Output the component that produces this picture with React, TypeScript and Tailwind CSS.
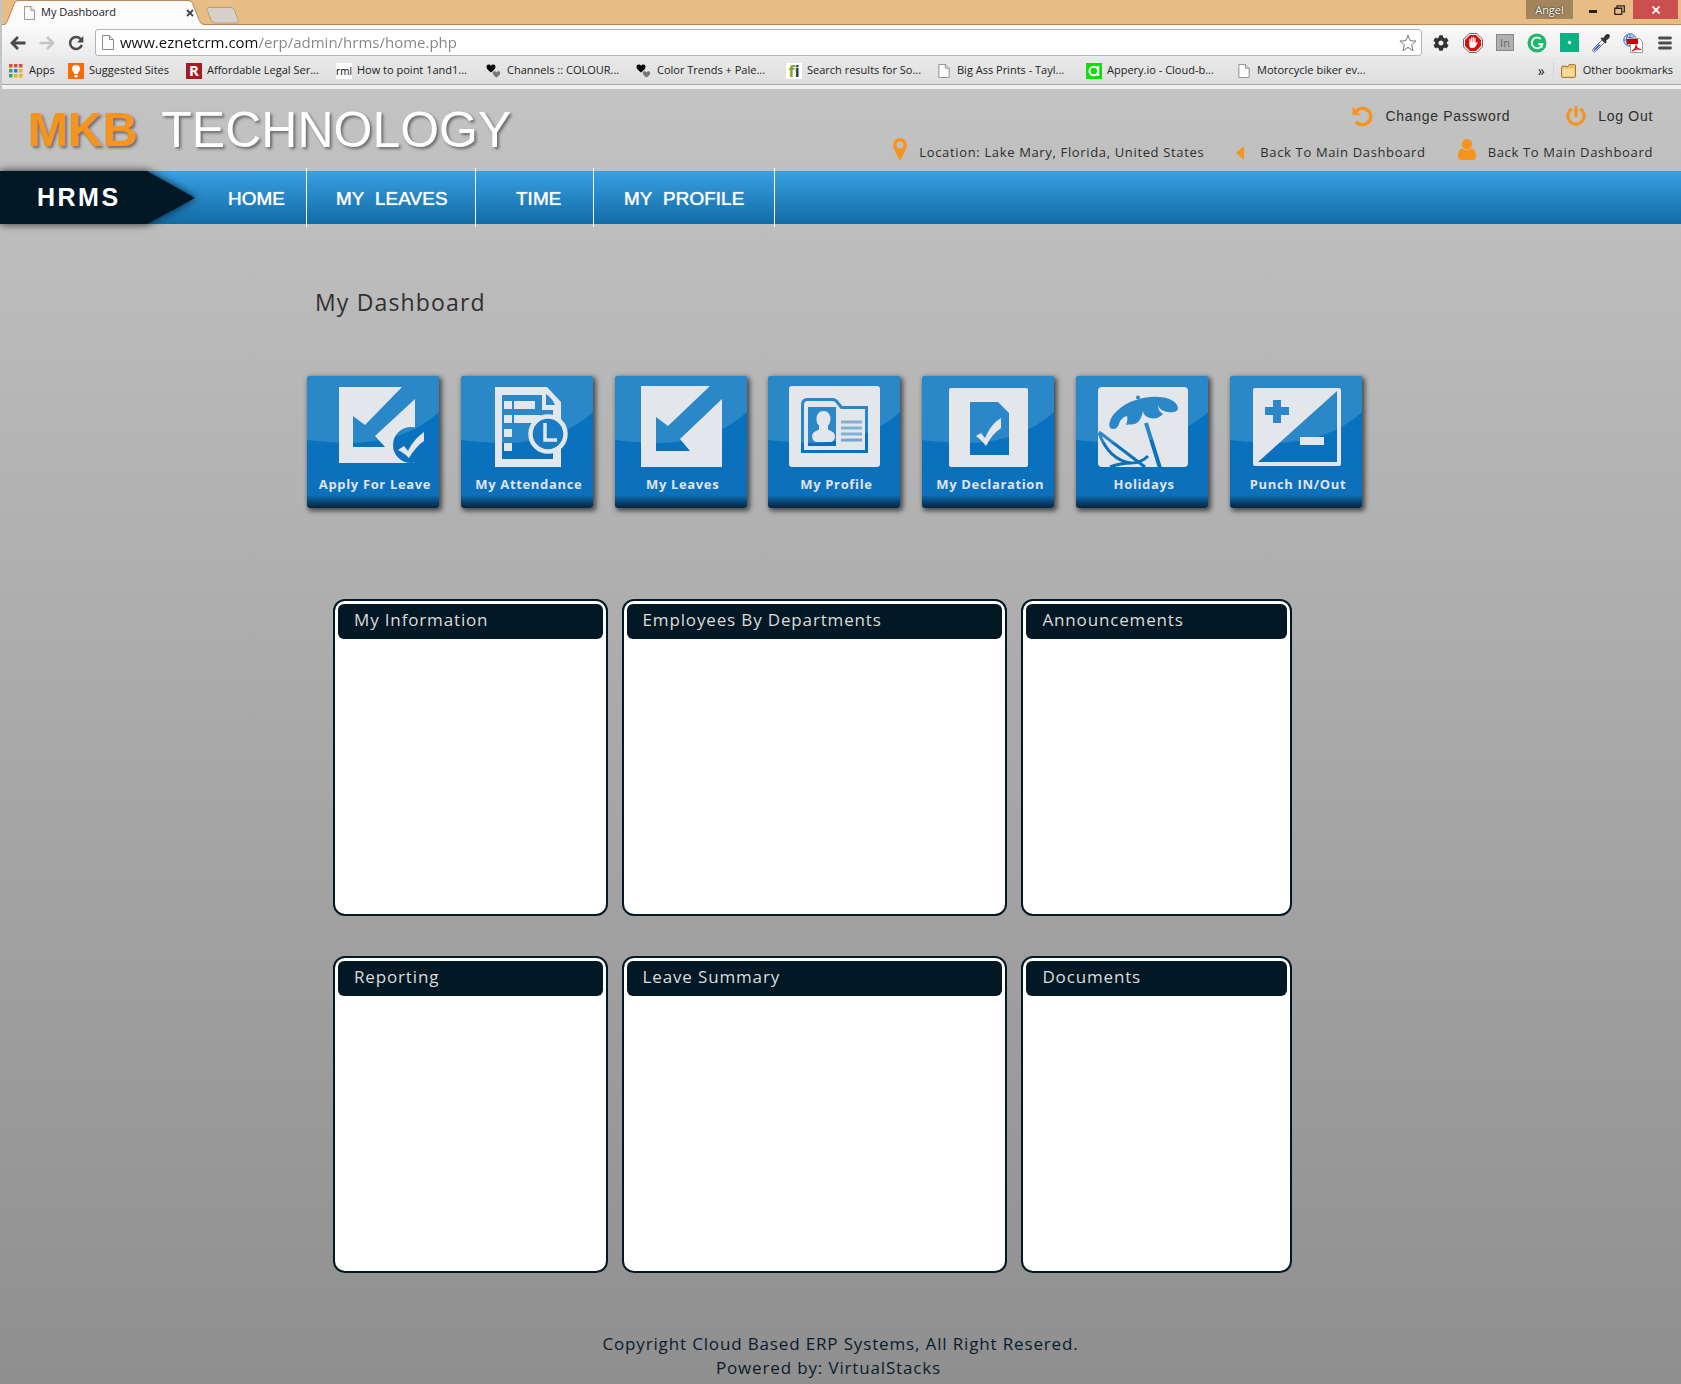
import React from "react";
import { FaPowerOff, FaCog } from "react-icons/fa";

const DocIcon = ({ className }: { className?: string }) => (
  <svg viewBox="0 0 12 15" className={className} aria-hidden="true">
    <path d="M.5.5h7l4 4v10H.5z" fill="#fbfbfb" stroke="#8b8b8b" />
    <path d="M7.500.5v4h4" fill="#e4e4e4" stroke="#8b8b8b" />
  </svg>
);

const HeartsIcon = () => (
  <svg viewBox="0 0 16 16" className="size-4" aria-hidden="true">
    <path d="M5 9.500C2.500 7.500.5 6 .5 3.700.5 1.200 3.800.6 5 3c1.200-2.400 4.500-1.800 4.500.7C9.500 6 7.500 7.500 5 9.500z" fill="#050505" />
    <path d="M10.500 14.500C8.500 13 6.800 11.800 6.800 10c0-2 2.700-2.400 3.700-.5 1-1.900 3.700-1.500 3.700.5 0 1.800-1.700 3-3.700 4.500z" fill="#777" />
  </svg>
);

const AppsIcon = () => (
  <svg viewBox="0 0 14 14" className="size-[14px]" aria-hidden="true">
    <path d="M0 0h3.500v3.500H0zM5 0h3.500v3.500H5zM10 0h3.500v3.500H10z" fill="#e5483c" />
    <path d="M0 5h3.500v3.500H0z" fill="#35a564" />
    <path d="M5 5h3.500v3.500H5z" fill="#2f7de1" />
    <path d="M10 5h3.500v3.500H10zM5 10h3.500v3.500H5zM10 10h3.500v3.500H10z" fill="#efb118" />
    <path d="M0 10h3.500v3.500H0z" fill="#35a564" />
  </svg>
);

const BulbIcon = () => (
  <svg viewBox="0 0 16 16" className="size-4" aria-hidden="true">
    <path d="M0 0h16v16H0z" fill="#fb6a0a" />
    <path d="M8 2a4 4 0 0 0-4 4c0 2 1.800 2.800 2.200 5h3.600C10.200 8.800 12 8 12 6a4 4 0 0 0-4-4zM6.400 12h3.200v1.200l-.8 1.300H7.200l-.8-1.300z" fill="#fff" />
  </svg>
);

const LetterIcon = ({ text, className }: { text: string; className: string }) => (
  <span className={"flex size-4 shrink-0 items-center justify-center leading-none " + className}>{text}</span>
);

const ApperyIcon = () => (
  <svg viewBox="0 0 16 16" className="size-4" aria-hidden="true">
    <path d="M0 0h16v16H0z" fill="#0be00b" />
    <circle cx="7.800" cy="8" r="4.300" fill="none" stroke="#fff" strokeWidth="2" />
    <path d="M12.200 3v10" stroke="#fff" strokeWidth="2" />
  </svg>
);

const bookmarks: { icon: React.ReactNode; label: string }[] = [
  { icon: <LetterIcon text="R" className="bg-[#a51b1f] text-[15px] font-bold text-white" />, label: "Affordable Legal Ser..." },
  { icon: <LetterIcon text="rml" className="bg-white text-[10px] text-black" />, label: "How to point 1and1..." },
  { icon: <HeartsIcon />, label: "Channels :: COLOUR..." },
  { icon: <HeartsIcon />, label: "Color Trends + Pale..." },
  {
    icon: (
      <span className="flex size-4 shrink-0 items-center justify-center bg-white text-[16px] leading-none font-bold">
        <span className="text-[#79a82c]">f</span>
        <span className="text-[#333]">i</span>
      </span>
    ),
    label: "Search results for So...",
  },
  { icon: <DocIcon className="h-[14px] w-4" />, label: "Big Ass Prints - Tayl..." },
  { icon: <ApperyIcon />, label: "Appery.io - Cloud-b..." },
  { icon: <DocIcon className="h-[14px] w-4" />, label: "Motorcycle biker ev..." },
];

const extensions: { label: string; icon: React.ReactNode }[] = [
  { label: "Settings", icon: <FaCog className="size-4 text-[#333]" /> },
  {
    label: "AdBlock",
    icon: (
      <svg viewBox="0 0 20 20" className="size-5">
        <path d="M6.200.5h7.600l5.700 5.700v7.600l-5.700 5.700H6.200L.5 13.800V6.200z" fill="#fff" stroke="#666" />
        <path d="M6.900 2h6.200L18 6.900v6.200L13.100 18H6.900L2 13.100V6.900z" fill="#dd0d0d" />
        <path d="M6.300 9.500V6.300c0-.9 1.200-.9 1.200 0V9h.4V5c0-.9 1.300-.9 1.300 0v4h.4V4.500c0-.9 1.300-.9 1.300 0V9h.4V5.500c0-.9 1.300-.9 1.300 0v5l1-1c.8-.6 1.400 0 .9.800l-2.300 3.700c-.9 1.400-5 1.400-5.500 0-.4-1.300-.4-2.500-.4-4.500z" fill="#fff" />
      </svg>
    ),
  },
  { label: "LinkedIn", icon: <span className="flex h-[17px] w-[18px] items-center justify-center border border-[#888] bg-[#b0b0b0] text-[11px] leading-none text-[#666]">In</span> },
  {
    label: "Grammarly",
    icon: (
      <svg viewBox="0 0 20 20" className="size-5">
        <circle cx="10" cy="10" r="9.500" fill="#1fb96c" />
        <path d="M13.800 6.200A5.300 5.300 0 1 0 15.300 11h-4M15.300 11l-1 4" fill="none" stroke="#fff" strokeWidth="1.800" />
      </svg>
    ),
  },
  {
    label: "Recorder",
    icon: (
      <svg viewBox="0 0 19 19" className="size-[19px]">
        <path d="M0 0h19v19H0z" fill="#09b183" />
        <circle cx="9.500" cy="9.500" r="1.700" fill="#fff" />
      </svg>
    ),
  },
  {
    label: "Color picker",
    icon: (
      <svg viewBox="0 0 20 20" className="size-5">
        <path d="M2 18.500c-1-1 0-2.500 1-3.500l8-8 2.500 2.500-8 8c-1 1-2.500 2-3.500 1z" fill="#eef2fa" stroke="#777" />
        <path d="M3 17.500c-.5-.8 0-1.500.8-2.300l3.700-3.700 2.500.2-4.700 4.800c-.8.8-1.600 1.500-2.300 1z" fill="#3366dd" />
        <path d="M9.500 5.500l1.500-1.300 1.200 1C13.500 3.500 14.500 1 16.500 1c2.200 0 3 2.200 2 3.700-.8 1.200-2.500 2-3.600 3l1 1.300-1.500 1.500z" fill="#333" />
      </svg>
    ),
  },
  {
    label: "Web to PDF",
    icon: (
      <svg viewBox="0 0 20 20" className="size-5">
        <circle cx="7" cy="7" r="6.300" fill="#cfe0f6" stroke="#3d74c0" />
        <path d="M1 7h12M7 1v12M3 3c2 2 6 2 8 0M4.500 2c-1.500 3-1.500 7 0 10" fill="none" stroke="#3d74c0" />
        <path d="M7.500 5.500h9l3 3v11h-12z" fill="#fff" stroke="#999" />
        <path d="M4 6h11v5H4z" fill="#d00000" />
        <path d="M9 18c3-1 4.500-4 4-6.500 0 3 2 5 5 5-3-1-6-.5-9 1.500z" fill="none" stroke="#c00" strokeWidth="1.200" />
      </svg>
    ),
  },
  {
    label: "Menu",
    icon: (
      <svg viewBox="0 0 14 14" className="size-[14px]">
        <path d="M1.500 2h11M1.500 7h11M1.500 12h11" stroke="#4d4d4d" strokeWidth="2.800" strokeLinecap="round" />
      </svg>
    ),
  },
];

const BrowserChrome = () => (
  <div className="border-l-2 border-[#c4c4c4] font-['Open_Sans',sans-serif] text-[#222]">
    <div className="flex h-[25px] items-start justify-between bg-[#e8bd85] shadow-[inset_0_-1px_0_#b08a58]">
      <div className="flex">
        <div className="relative flex h-[25px] w-[208px] items-center pl-[22px]">
          <svg viewBox="0 0 208 25" className="absolute inset-0 size-full" aria-hidden="true">
            <path d="M0 25c4 0 5-2 6-5l6-15c1-3 2-4 5-4h169c3 0 4 1 5 4l6 15c1 3 2 5 8 5z" fill="#fbfbfb" />
            <path d="M0 24.500c4 0 5-2 6-5l6-15c1-3 2-4 5-4h169c3 0 4 1 5 4l6 15c1 3 2 5 8 5" fill="none" stroke="#b08a58" />
          </svg>
          <DocIcon className="relative h-[14px] w-[11px]" />
          <span className="relative ml-[6px] grow text-[11px]">My Dashboard</span>
          <button aria-label="Close tab" className="relative mr-4">
            <svg viewBox="0 0 8 8" className="size-2"><path d="M1 1l6 6M7 1L1 7" stroke="#444" strokeWidth="1.800" /></svg>
          </button>
        </div>
        <button aria-label="New tab" className="mt-[5px] -ml-1">
          <svg viewBox="0 0 33 17" className="h-[17px] w-[33px]">
            <path d="M3 .5h21c3 0 4 1 5 4l3 8c1 3 0 3.500-2 3.500H10c-3 0-4-1-5-3.500L1.500 4C.5 1.500 1 .5 3 .5z" fill="#d6d2cb" stroke="#b59d7c" />
          </svg>
        </button>
      </div>
      <div className="flex h-[19px] items-center">
        <button className="h-full w-[47px] bg-[#a3855c] text-[11px] leading-none text-white [text-shadow:0_0_2px_#000]">Angel</button>
        <button aria-label="Minimize" className="flex w-9 justify-end pr-3 pt-1">
          <span className="h-[3px] w-2 bg-[#222]" />
        </button>
        <button aria-label="Restore" className="w-6 pl-[5px]">
          <svg viewBox="0 0 11 10" className="h-[10px] w-[11px]">
            <path d="M.75 3h7v6.300h-7zM.5 3.500h7.500M3 2.500V.8h7.300V7H8.500" fill="none" stroke="#222" strokeWidth="1.200" />
          </svg>
        </button>
        <button aria-label="Close" className="mr-[3px] flex h-full w-[45px] items-center justify-center bg-[#c9504f]">
          <svg viewBox="0 0 8 8" className="size-2"><path d="M.5.5l7 7M7.500.5l-7 7" stroke="#fff" strokeWidth="1.700" /></svg>
        </button>
      </div>
    </div>

    <div className="flex h-8 items-center bg-linear-to-b from-[#fbfbfb] to-[#ececec] pt-[3px]">
      <div className="flex w-[93px] shrink-0 items-center gap-[13px] pl-2">
        <button aria-label="Back">
          <svg viewBox="0 0 16 14" className="h-[14px] w-4"><path d="M15.500 7H2.500M8 1L2 7l6 6" fill="none" stroke="#4a4a4a" strokeWidth="2.800" /></svg>
        </button>
        <button aria-label="Forward">
          <svg viewBox="0 0 16 14" className="h-[14px] w-4"><path d="M.5 7h13M8 1l6 6-6 6" fill="none" stroke="#c6c6c6" strokeWidth="2.600" /></svg>
        </button>
        <button aria-label="Reload">
          <svg viewBox="0 0 16 16" className="size-4">
            <path d="M13 4.500A6 6 0 1 0 13.800 10" fill="none" stroke="#4a4a4a" strokeWidth="2.500" />
            <path d="M15.300 1v6.500H9z" fill="#4a4a4a" />
          </svg>
        </button>
      </div>
      <div className="flex h-[27px] grow items-center rounded-[3px] border border-[#b4b4b4] bg-white pr-1">
        <DocIcon className="ml-[6px] h-[15px] w-3" />
        <input
          aria-label="Address"
          defaultValue="www.eznetcrm.com/erp/admin/hrms/home.php"
          className="ml-[6px] grow bg-linear-to-r from-[#111] from-[137px] to-[#848484] to-[137px] bg-clip-text text-[15px] text-transparent outline-none"
        />
        <button aria-label="Bookmark this page">
          <svg viewBox="0 0 18 18" className="size-[18px]">
            <path d="M9 1.200l2.200 5.500 5.900.3-4.600 3.800 1.600 5.800L9 13.400l-5.100 3.200 1.600-5.800L.9 7l5.900-.3z" fill="#fff" stroke="#777" />
          </svg>
        </button>
      </div>
      <div className="flex shrink-0 pl-[3px]">
        {extensions.map((e) => (
          <button key={e.label} aria-label={e.label} className="flex w-8 items-center justify-center">
            {e.icon}
          </button>
        ))}
      </div>
    </div>

    <nav aria-label="Bookmarks" className="flex h-7 items-center overflow-hidden border-b border-[#a8a8a8] bg-linear-to-b from-[#e9e9e9] to-[#dedede] pr-2 pl-[7px] text-[11px] whitespace-nowrap text-[#222]">
      <a href="#apps" className="flex w-[59px] items-center gap-[6px]"><AppsIcon />Apps</a>
      <a href="#suggested" className="flex w-[118px] items-center gap-[5px]"><BulbIcon />Suggested Sites</a>
      {bookmarks.map((b) => (
        <a key={b.label} href="#bookmark" className="flex w-[150px] items-center gap-[5px]">
          {b.icon}
          {b.label}
        </a>
      ))}
      <button aria-label="More bookmarks" className="ml-auto text-sm leading-none">»</button>
      <a href="#other" className="ml-2 flex items-center gap-[6px] border-l border-[#d0d8e0] pl-[7px]">
        <svg viewBox="0 0 16 14" className="h-[14px] w-4" aria-hidden="true">
          <path d="M.5 12.500V3.500C.5 2.500 1 2 2 2l5 .5 1-1.800c.3-.3.500-.3 1-.3h4.500c.6 0 1 .4 1 1v11c0 .6-.4 1-1 1H1.500c-.6 0-1-.4-1-1z" fill="#eabb66" stroke="#a4762c" />
          <path d="M1.500 4.500h12v8h-12z" fill="#f9dc9a" />
        </svg>
        Other bookmarks
      </a>
    </nav>
    <div className="h-1 bg-[#f1f1f1]" />
  </div>
);

const UndoIcon = () => (
  <svg viewBox="0 0 21 21" className="size-[21px]" aria-hidden="true">
    <path d="M4 5.500A8.200 8.200 0 1 1 4 15.500" fill="none" stroke="#f7941e" strokeWidth="3.400" />
    <path d="M.5.800V9h8z" fill="#f7941e" />
  </svg>
);

const PinIcon = () => (
  <svg viewBox="0 0 14 22" className="mb-2 h-[22px] w-[14px]" aria-hidden="true">
    <path d="M7 0a7 7 0 0 1 7 7c0 1.500-.3 2.500-.7 3.300L8.300 21q-.5 1-1.300 1t-1.300-1L.7 10.300C.3 9.500 0 8.500 0 7a7 7 0 0 1 7-7zm0 3.500a3.500 3.500 0 1 0 0 7 3.500 3.500 0 0 0 0-7z" fill="#f7941e" />
  </svg>
);

const UserIcon = () => (
  <svg viewBox="0 0 18 21" className="mb-2 h-[21px] w-[18px]" aria-hidden="true">
    <circle cx="9" cy="5.200" r="5.200" fill="#f7941e" />
    <path d="M4.500 9.500Q9 13.500 13.500 9.500C17 10 18 13.500 18 17.500c0 2-1.200 3.500-3.200 3.500H3.200C1.200 21 0 19.500 0 17.500c0-4 1-7.500 4.500-8z" fill="#f7941e" />
  </svg>
);

const utility = "flex items-center tracking-wider text-[#2e2e2e]";

const Header = () => (
  <header className="flex h-[82px] items-start justify-between pr-7 pl-7">
    <h1 className="flex items-center gap-6 pt-[11px] font-['Liberation_Sans',Arial,sans-serif] text-[50px] leading-[60px] text-white [text-shadow:2px_2px_3px_rgba(0,0,0,0.45)]">
      <span className="text-[48px] font-bold text-[#f7941e]">MKB</span>
      <span>TECHNOLOGY</span>
    </h1>
    <div className="flex flex-col items-end pt-[15px] font-['Open_Sans',sans-serif]">
      <div className="flex h-6 items-center gap-14 font-['Liberation_Sans',Arial,sans-serif] text-sm">
        <a href="#password" className={utility + " gap-3"}><UndoIcon />Change Password</a>
        <a href="#logout" className={utility + " gap-3"}><FaPowerOff className="size-5 text-[#f7941e]" />Log Out</a>
      </div>
      <div className="mt-[11px] flex h-7 items-center gap-8 text-[13px]">
        <span className={utility + " gap-3"}>
          <PinIcon />Location: Lake Mary, Florida, United States
        </span>
        <a href="#main" className={utility + " gap-4"}>
          <svg viewBox="0 0 8 14" className="h-[14px] w-2" aria-hidden="true"><path d="M8 0v14L0 7z" fill="#f7941e" /></svg>
          Back To Main Dashboard
        </a>
        <a href="#user" className={utility + " gap-3"}>
          <UserIcon />Back To Main Dashboard
        </a>
      </div>
    </div>
  </header>
);

const navItems = [
  { label: "HOME", width: "w-[112px] pl-[33px]" },
  { label: "MY\u00a0 LEAVES", width: "w-[169px] pl-[29px]" },
  { label: "TIME", width: "w-[118px] pl-[40px]" },
  { label: "MY\u00a0 PROFILE", width: "w-[181px] pl-[30px]" },
];

const NavBar = () => (
  <nav aria-label="Main" className="flex h-[53px] items-center bg-linear-to-b from-[#38a1e4] to-[#116ba5] font-['Liberation_Sans',Arial,sans-serif] text-white">
    <div className="relative flex h-full w-[195px] items-center pl-[37px]">
      <svg viewBox="0 0 195 53" className="absolute inset-0 size-full overflow-visible drop-shadow-[0_0_4px_rgba(0,0,0,0.8)]" aria-hidden="true">
        <path d="M0 0h147l48 27-48 26H0z" fill="#021825" />
      </svg>
      <span className="relative text-[25px] font-bold tracking-widest">HRMS</span>
    </div>
    {navItems.map((n) => (
      <a key={n.label} href="#nav" className={"flex h-[59px] items-center border-r border-white pt-1 text-[19px] whitespace-pre [text-shadow:0_0_1px_#fff] " + n.width}>
        {n.label}
      </a>
    ))}
  </nav>
);

type Glyph = { id: string; label: string; plate: React.ReactNode; cut: React.ReactNode; top?: React.ReactNode };

const glyphs: Glyph[] = [
  {
    id: "apply",
    label: "Apply For Leave",
    plate: <path d="M32 11h76v76H32z" />,
    cut: (
      <>
        <path d="M95 11h13v12L68 60l10 11H46V40l12 9z" />
        <circle cx="104" cy="69" r="18" />
      </>
    ),
    top: <path d="M91 74l6-4 4 5c4-8 9-14 16-19v9c-6 4-11 10-15 17-4-4-7-6-11-8z" />,
  },
  {
    id: "attendance",
    label: "My Attendance",
    plate: <path d="M34 11h52l14 15v65H34z" />,
    cut: (
      <>
        <path d="M41 19h40v15h11v49H41z" />
        <path d="M85 18v11h9c-2-5-5-8-9-11z" />
      </>
    ),
    top: (
      <>
        <path d="M43 25h8v8h-8zM43 39h8v8h-8zM43 53h8v8h-8zM43 67h8v8h-8zM53 25h21v8H53zM53 39h27l-6 8H53z" />
        <g fill="none">
          <circle cx="87" cy="58" r="16" fill="#1a7bc2" />
          <circle cx="87" cy="58" r="17.500" stroke="#e3e6ea" strokeWidth="4.500" />
          <path d="M84 47v17h12" stroke="#e3e6ea" strokeWidth="3.500" />
        </g>
      </>
    ),
  },
  {
    id: "leaves",
    label: "My Leaves",
    plate: <path d="M26 10h81v81H26z" />,
    cut: <path d="M95 10h12v13L65 63l10 12H41V41l12 9z" />,
  },
  {
    id: "profile",
    label: "My Profile",
    plate: <rect x="21" y="10" width="91" height="81" rx="3" />,
    cut: (
      <>
        <path d="M34.500 75.500V29q0-5.500 5-5.500h25q3 0 5 3l4 5h25v44z" fill="none" stroke="#000" strokeWidth="3" />
        <path d="M40 31h28v39H40z" />
        <path d="M73 46h21M73 52h21M73 58h21M73 64h21" stroke="#777" strokeWidth="3" />
      </>
    ),
    top: (
      <path d="M55.500 35c4.500 0 7 3.500 7 8 0 3-1 5-2.500 6.500v4l4 2c4 2 4.500 9-1 10.500H48c-5-1.500-5-8.500-1-10.500l4-2v-4c-2-1.500-2.500-4-2.500-6.500 0-4.500 2.500-8 7-8z" />
    ),
  },
  {
    id: "declaration",
    label: "My Declaration",
    plate: <rect x="27" y="12" width="79" height="79" rx="2" />,
    cut: <path d="M48 26h28l11 11v42H48z" />,
    top: <path d="M54 60l5-3 4 5c4-9 9-16 16-20v10c-6 4-11 10-15 18-3-4-6-7-10-10z" />,
  },
  {
    id: "holidays",
    label: "Holidays",
    plate: <rect x="22" y="11" width="90" height="80" rx="4" />,
    cut: (
      <>
        <circle cx="62" cy="21.500" r="2" />
        <path d="M37 53C31 53 33 44 38 38c6-7 14-12 24-14.500C68 21.500 75 20.500 82 21c10 0 19 4 20 11 0 5-9 5-14 3-3-1-5-3-6-5.500 0 4 2 7 5 8.500-4 4.500-9 5-13 4-4-1-7-4-7-7.500-1 6-3 11-7 13-3 1.500-7 .5-10 1.500 1-3 2-6 1-9-4 1-7 4-8 8-1 3-3 5-6 5z" />
        <path d="M70 47l14 45" stroke="#000" strokeWidth="4" fill="none" />
        <path d="M23 56l46 35M23 57q10 27 32 30 10 0 17-7M34 91q10-4 22-4" stroke="#000" strokeWidth="3" fill="none" />
      </>
    ),
  },
  {
    id: "punch",
    label: "Punch IN/Out",
    plate: <rect x="23" y="12" width="88" height="78" rx="2" />,
    cut: (
      <>
        <path d="M28 86l79-71v71z" />
        <path d="M43 24h8v7h8v8h-8v8h-8v-8h-8v-8h8z" />
      </>
    ),
    top: <path d="M70 61h24v8H70z" />,
  },
];

const Tile = ({ glyph }: { glyph: Glyph }) => (
  <a
    href={"#" + glyph.id}
    className="flex h-[132px] w-[132px] flex-col items-center overflow-hidden rounded-[3px] bg-linear-to-b from-[#0672c0] via-[#0d70bb] via-90% to-[#04253f] shadow-[2px_2px_5px_1px_rgba(0,0,0,0.6)]"
  >
    <svg viewBox="0 0 132 96" className="h-24 w-full shrink-0" aria-hidden="true">
      <defs>
        <mask id={"cut-" + glyph.id}>
          <path d="M0 0h132v96H0z" fill="#fff" />
          <g fill="#000">{glyph.cut}</g>
        </mask>
      </defs>
      <path d="M0 0h132v36Q97 68 38 67 17 66 0 64z" fill="#2b88c8" />
      <g fill="#e3e6ea">
        <g mask={`url(#cut-${glyph.id})`}>{glyph.plate}</g>
        {glyph.top}
      </g>
    </svg>
    <span className="pl-1 text-[13px] leading-6 font-bold tracking-wider whitespace-nowrap text-[#e0e4ea]">{glyph.label}</span>
  </a>
);

const panels = ["My Information", "Employees By Departments", "Announcements", "Reporting", "Leave Summary", "Documents"];

const Panel = ({ title }: { title: string }) => (
  <section className="min-h-[317px] rounded-xl border-2 border-[#021825] bg-white p-[3px]">
    <h3 className="h-[35px] rounded-md bg-[#021825] px-4 text-[17px] leading-8 tracking-wider text-[#dcdcdc]">{title}</h3>
  </section>
);

export default function App() {
  return (
    <div className="flex min-h-screen flex-col bg-[#909090]">
      <BrowserChrome />
      <div className="flex grow flex-col bg-linear-to-b from-[#c3c3c3] to-[#8f8f8f] font-['Open_Sans',sans-serif]">
        <Header />
        <NavBar />
        <main className="mx-auto w-full max-w-[1067px] pr-3">
          <h2 className="px-2 pt-[62px] text-[23px] leading-8 tracking-wider text-[#303030]">My Dashboard</h2>
          <div className="mt-[58px] flex flex-wrap justify-between gap-y-6">
            {glyphs.map((g) => (
              <Tile key={g.id} glyph={g} />
            ))}
          </div>
          <div className="mt-[91px] grid grid-cols-[274fr_385fr_270fr] gap-x-[14px] gap-y-10 pr-[70px] pl-[26px]">
            {panels.map((p) => (
              <Panel key={p} title={p} />
            ))}
          </div>
        </main>
        <footer className="mt-[59px] pb-1 text-center text-[17px] leading-6 tracking-wider text-[#0b1c2a]">
          <p>Copyright Cloud Based ERP Systems, All Right Resered.</p>
          <p className="pr-6">Powered by: VirtualStacks</p>
        </footer>
      </div>
    </div>
  );
}
